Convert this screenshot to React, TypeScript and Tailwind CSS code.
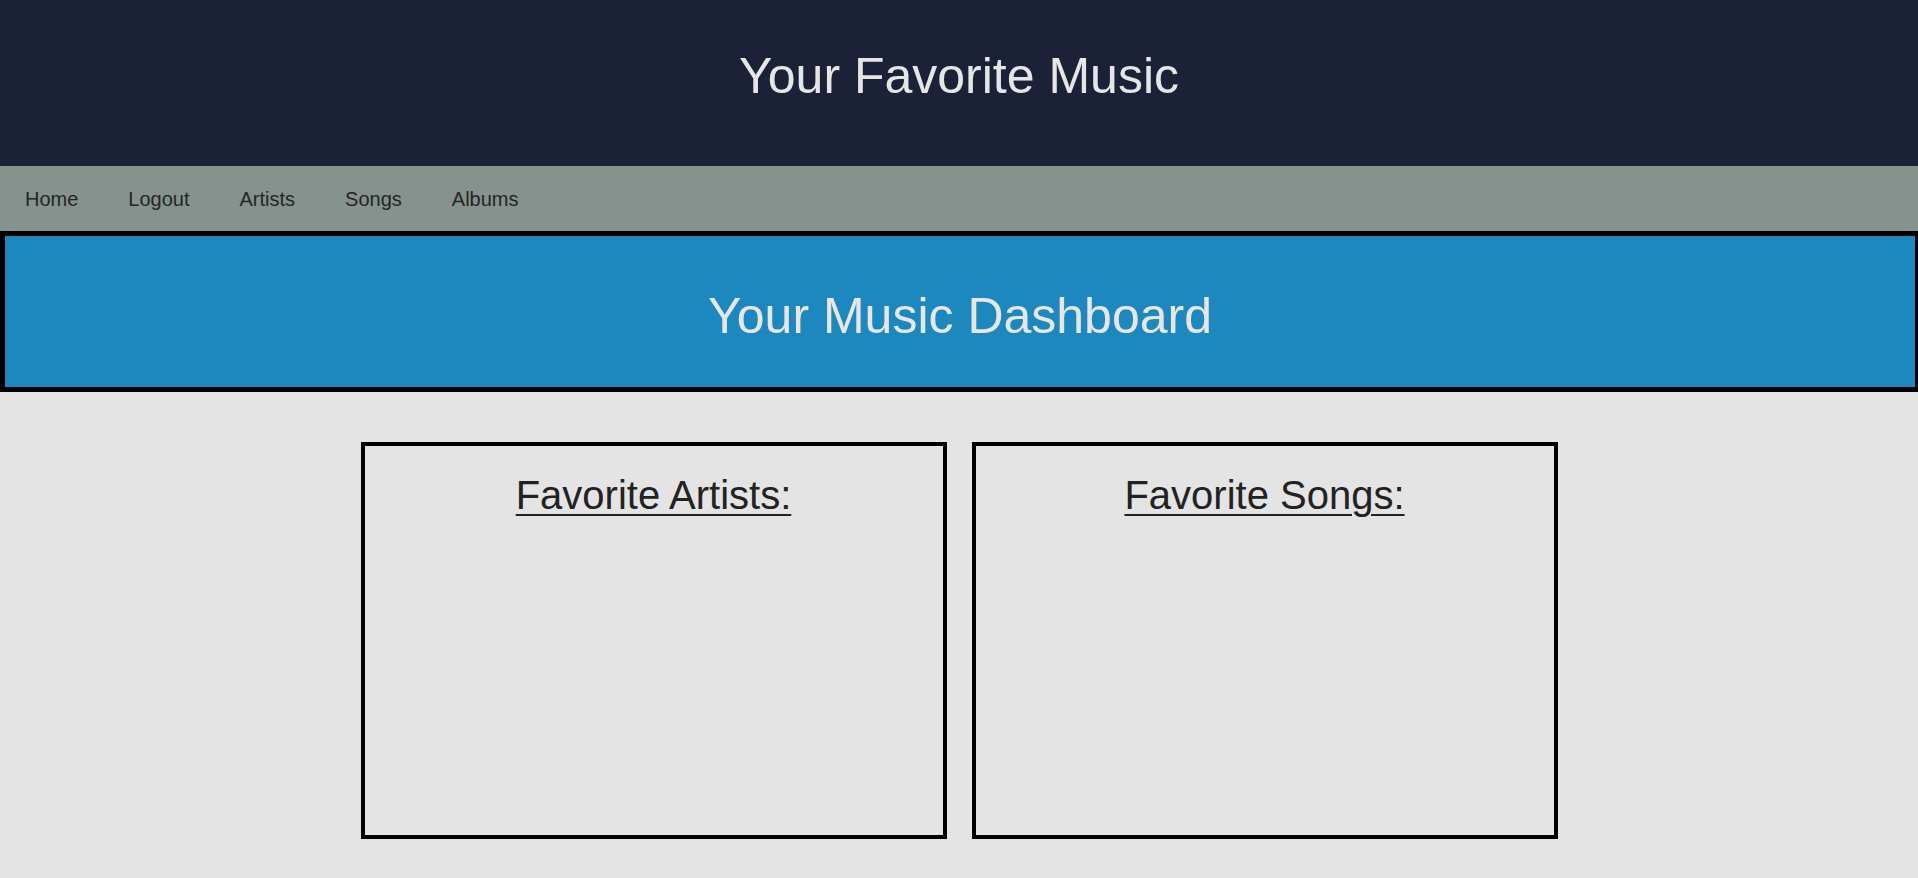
import React from "react";

const links = ["Home", "Logout", "Artists", "Songs", "Albums"];

function Card({ title }: { title: string }) {
  return (
    <div className="h-[397px] w-[586px] border-4 border-black">
      <h2 className="mt-[26px] text-center text-[40px] leading-[46px] text-[#222222] underline decoration-2 underline-offset-[5px]">
        {title}
      </h2>
    </div>
  );
}

export default function App() {
  return (
    <div className="min-h-[878px] bg-[#e4e4e4] font-['Liberation_Sans',Arial,sans-serif]">
      <header className="h-[166px] bg-[#1b2238] pt-[48px]">
        <h1 className="text-center text-[50px] leading-[57px] text-[#e6e6e6]">
          Your Favorite Music
        </h1>
      </header>

      <nav className="flex h-[65px] items-center bg-[#85928d]">
        {links.map((link) => (
          <a
            key={link}
            href="#"
            className="px-[25px] text-[20px] text-[#262626]"
          >
            {link}
          </a>
        ))}
      </nav>

      <section className="flex h-[161px] items-center justify-center border-[5px] border-r-[3px] border-black bg-[#1d88bd] pt-[10px]">
        <h1 className="text-[50px] leading-[57px] text-[#e6e6e6]">
          Your Music Dashboard
        </h1>
      </section>

      <main className="flex justify-center gap-[25px] pt-[50px]">
        <Card title="Favorite Artists:" />
        <Card title="Favorite Songs:" />
      </main>
    </div>
  );
}
